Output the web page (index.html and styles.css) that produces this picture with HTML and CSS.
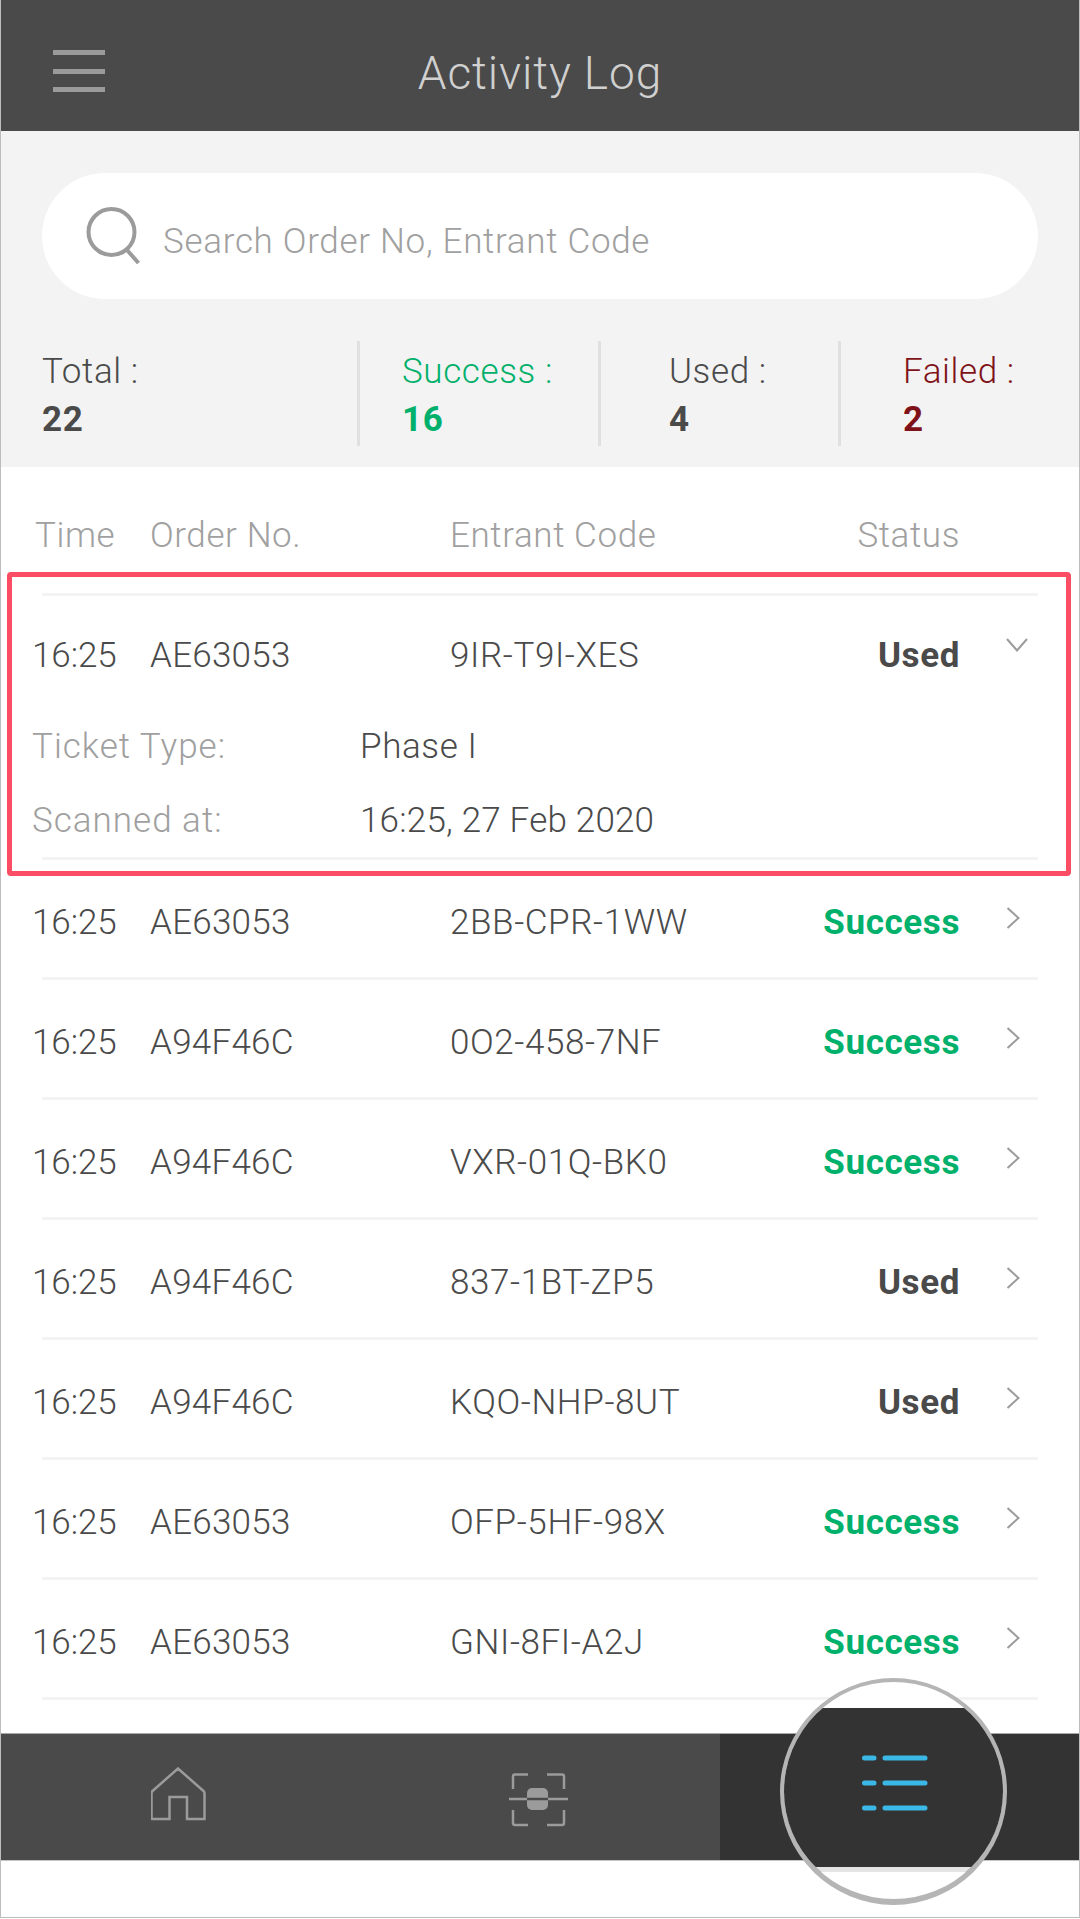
FILE: index.html
```html
<!DOCTYPE html>
<html lang="en">
<head>
    <meta charset="UTF-8">
    <meta name="viewport" content="width=device-width, initial-scale=1.0">
    <title>Activity Log</title>
    <link rel="stylesheet" href="styles.css">
</head>
<body>
    <div class="phone">
        <header class="topbar">
            <svg class="menu-icon" width="52" height="42" viewBox="0 0 52 42">
                <rect x="0" y="0" width="52" height="5"/>
                <rect x="0" y="19" width="52" height="5"/>
                <rect x="0" y="37" width="52" height="5"/>
            </svg>
            <h1 class="title">Activity Log</h1>
        </header>

        <section class="summary">
            <div class="search">
                <svg class="search-icon" width="54" height="58" viewBox="0 0 54 58">
                    <circle cx="25.5" cy="25" r="23"/>
                    <path d="M41 43l11.500 13"/>
                </svg>
                <span class="search-text">Search Order No, Entrant Code</span>
            </div>
            <div class="stats">
                <div class="stat stat-total"><span class="stat-label">Total :</span><b>22</b></div>
                <div class="stat stat-success"><span class="stat-label">Success :</span><b>16</b></div>
                <div class="stat stat-used"><span class="stat-label">Used :</span><b>4</b></div>
                <div class="stat stat-failed"><span class="stat-label">Failed :</span><b>2</b></div>
            </div>
        </section>

        <main class="log">
            <div class="log-head">
                <span class="head-time">Time</span>
                <span>Order No.</span>
                <span>Entrant Code</span>
                <span class="status-cell">Status</span>
            </div>

            <div class="highlight">
                <div class="highlight-row">
                    <div class="row-main row-open">
                        <span>16:25</span>
                        <span>AE63053</span>
                        <span>9IR-T9I-XES</span>
                        <span class="status-cell used">Used</span>
                        <svg class="chevron chevron-down" width="22" height="14" viewBox="0 0 22 14"><path d="M1 1l10 11.500L21 1"/></svg>
                    </div>
                    <div class="detail detail-type"><span class="detail-label">Ticket Type:</span><span>Phase I</span></div>
                    <div class="detail"><span class="detail-label">Scanned at:</span><span class="detail-date">16:25, 27 Feb 2020</span></div>
                </div>
            </div>

            <div class="log-row">
                <div class="row-main">
                    <span>16:25</span><span>AE63053</span><span>2BB-CPR-1WW</span>
                    <span class="status-cell success">Success</span>
                    <svg class="chevron" width="14" height="22" viewBox="0 0 14 22"><path d="M1.500 1l11 10-11 10"/></svg>
                </div>
            </div>
            <div class="log-row">
                <div class="row-main">
                    <span>16:25</span><span>A94F46C</span><span>0O2-458-7NF</span>
                    <span class="status-cell success">Success</span>
                    <svg class="chevron" width="14" height="22" viewBox="0 0 14 22"><path d="M1.500 1l11 10-11 10"/></svg>
                </div>
            </div>
            <div class="log-row">
                <div class="row-main">
                    <span>16:25</span><span>A94F46C</span><span>VXR-01Q-BK0</span>
                    <span class="status-cell success">Success</span>
                    <svg class="chevron" width="14" height="22" viewBox="0 0 14 22"><path d="M1.500 1l11 10-11 10"/></svg>
                </div>
            </div>
            <div class="log-row">
                <div class="row-main">
                    <span>16:25</span><span>A94F46C</span><span>837-1BT-ZP5</span>
                    <span class="status-cell used">Used</span>
                    <svg class="chevron" width="14" height="22" viewBox="0 0 14 22"><path d="M1.500 1l11 10-11 10"/></svg>
                </div>
            </div>
            <div class="log-row">
                <div class="row-main">
                    <span>16:25</span><span>A94F46C</span><span>KQO-NHP-8UT</span>
                    <span class="status-cell used">Used</span>
                    <svg class="chevron" width="14" height="22" viewBox="0 0 14 22"><path d="M1.500 1l11 10-11 10"/></svg>
                </div>
            </div>
            <div class="log-row">
                <div class="row-main">
                    <span>16:25</span><span>AE63053</span><span>OFP-5HF-98X</span>
                    <span class="status-cell success">Success</span>
                    <svg class="chevron" width="14" height="22" viewBox="0 0 14 22"><path d="M1.500 1l11 10-11 10"/></svg>
                </div>
            </div>
            <div class="log-row">
                <div class="row-main">
                    <span>16:25</span><span>AE63053</span><span>GNI-8FI-A2J</span>
                    <span class="status-cell success">Success</span>
                    <svg class="chevron" width="14" height="22" viewBox="0 0 14 22"><path d="M1.500 1l11 10-11 10"/></svg>
                </div>
            </div>
        </main>

        <nav class="tabs">
            <div class="tab">
                <svg class="tab-icon" width="60" height="60" viewBox="1 0 60 60">
                    <path d="M1.500 52V26a3 3 0 0 1 1-2L28 1.500 53.500 24a3 3 0 0 1 1 2V52H37V30H19.500V52Z"/>
                </svg>
            </div>
            <div class="tab">
                <svg class="tab-icon" width="64" height="60" viewBox="0 0 64 60">
                    <path d="M20 7.500H7a2 2 0 0 0-2 2V22M39 7.500H54a2 2 0 0 1 2 2V22M20 58H7a2 2 0 0 1-2-2V43M39 58H54a2 2 0 0 0 2-2V43M1 32H20M40 32H60"/>
                    <rect class="scan-block" x="19" y="21" width="21" height="22" rx="5"/>
                    <path class="scan-cut" d="M19 32H40"/>
                </svg>
            </div>
            <div class="tab tab-active"></div>
        </nav>

        <div class="spotlight">
            <div class="spotlight-band">
                <svg width="66" height="56" viewBox="0 0 66 56">
                    <path d="M2.500 3H12M23 3H63M2.500 28H12M23 28H63M2.500 53H12M23 53H63"/>
                </svg>
            </div>
        </div>
    </div>
</body>
</html>
```

FILE: styles.css
```css
* {
    margin: 0;
    padding: 0;
    box-sizing: border-box;
}
body {
    font-family: Roboto, "Liberation Sans", sans-serif;
    background-color: #ffffff;
    color: #4a4a4a;
    font-size: 35px;
    letter-spacing: 0.6px;
}
.phone {
    position: relative;
    display: flex;
    flex-direction: column;
    width: 1080px;
    height: 1918px;
    border: 1px solid #bdbdbd;
    border-top: none;
    overflow: hidden;
}
.topbar {
    position: relative;
    display: flex;
    align-items: center;
    justify-content: center;
    height: 131px;
    background-color: #4a4a4a;
}
.menu-icon {
    position: absolute;
    left: 52px;
    top: 50px;
    fill: #9b9b9b;
}
.title {
    font-size: 46px;
    font-weight: 300;
    letter-spacing: 0.9px;
    color: #d0d0d0;
    padding-top: 14px;
}
.summary {
    height: 336px;
    padding-top: 42px;
    background-color: #f3f3f3;
}
.search {
    display: flex;
    align-items: center;
    height: 126px;
    margin: 0 41px;
    padding-left: 44px;
    border-radius: 63px;
    background-color: #ffffff;
}
.search-icon {
    fill: none;
    stroke: #9b9b9b;
    stroke-width: 4;
    flex-shrink: 0;
}
.search-text {
    margin-left: 23px;
    padding-top: 10px;
    color: #a0a0a0;
    font-weight: 300;
    letter-spacing: 0.7px;
}
.stats {
    display: grid;
    grid-template-columns: 356px 241px 240px 1fr;
    height: 105px;
    margin-top: 42px;
}
.stat {
    display: flex;
    flex-direction: column;
    justify-content: center;
    gap: 6px;
    padding-top: 4px;
    line-height: 42px;
    border-left: 3px solid #e0e0e0;
}
.stat b {
    font-weight: 700;
}
.stat-label {
    font-weight: 300;
}
.stat-total {
    padding-left: 41px;
    border-left: none;
}
.stat-success {
    padding-left: 42px;
    color: #00b06b;
}
.stat-used {
    padding-left: 68px;
}
.stat-failed {
    padding-left: 62px;
    color: #7f1218;
}
.log {
    flex: 1;
}
.log-head, .row-main {
    display: grid;
    grid-template-columns: 118px 300px 250px 260px 1fr;
    align-items: center;
}
.log-head {
    height: 105px;
    padding-left: 31px;
    padding-top: 32px;
    font-weight: 300;
    color: #a0a0a0;
}
.head-time {
    margin-left: 3px;
}
.status-cell {
    text-align: right;
}
.row-main span:first-child {
    letter-spacing: -0.1px;
}
.row-main span:nth-child(2) {
    letter-spacing: 0.25px;
}
.highlight {
    position: relative;
    margin: 0 8px -16px 6px;
    padding: 16px 28px 11px 30px;
    border: 5px solid #fb4d64;
    border-radius: 4px;
}
.highlight-row {
    height: 267px;
    border-top: 3px solid #f3f3f3;
    border-bottom: 3px solid #f3f3f3;
}
.highlight .row-main {
    margin-left: -10px;
}
.row-open {
    height: 115px;
    padding-top: 4px;
    font-weight: 300;
}
.detail {
    display: grid;
    grid-template-columns: 328px 1fr;
    align-items: center;
    height: 73px;
    margin-left: -10px;
    font-weight: 300;
}
.detail-type {
    padding-bottom: 2px;
}
.detail-label {
    color: #a0a0a0;
    letter-spacing: 1px;
}
.detail-date {
    letter-spacing: 0.2px;
}
.log-row {
    margin: 0 41px;
    border-bottom: 3px solid #f3f3f3;
}
.log-row .row-main {
    height: 117px;
    margin-left: -10px;
    font-weight: 300;
    padding-top: 8px;
}
.row-main .used, .row-main .success {
    font-weight: 700;
}
.row-main .success {
    color: #00b06b;
}
.chevron {
    fill: none;
    stroke: #9b9b9b;
    stroke-width: 2;
    margin-left: 46px;
    margin-top: -9px;
}
.chevron-down {
    margin-top: -22px;
}
.tabs {
    display: grid;
    grid-template-columns: 359px 360px 1fr;
    height: 128px;
    margin-bottom: 56px;
    background-color: #4a4a4a;
    border-top: 1px solid #a8a8a8;
    border-bottom: 1px solid #c4c4c4;
}
.tab {
    display: flex;
    align-items: center;
    justify-content: center;
}
.tab-active {
    background-color: #333333;
}
.tab-icon {
    fill: none;
    stroke: #9b9b9b;
    stroke-width: 2.500;
}
.scan-block {
    fill: #9b9b9b;
    stroke: none;
}
.scan-cut {
    stroke: #4a4a4a;
}
.spotlight {
    position: absolute;
    left: 779px;
    top: 1678px;
    width: 227px;
    height: 227px;
    border: 4px solid #b5b5b5;
    border-bottom-width: 6px;
    border-radius: 50%;
    background-color: #ffffff;
    overflow: hidden;
}
.spotlight-band {
    display: flex;
    align-items: center;
    justify-content: center;
    height: 164px;
    margin-top: 26px;
    padding-bottom: 9px;
    padding-left: 2px;
    background-color: #333333;
    border-bottom: 5px solid #e4e4e4;
}
.spotlight-band svg {
    fill: none;
    stroke: #3bb8e5;
    stroke-width: 5;
    stroke-linecap: round;
}
```
